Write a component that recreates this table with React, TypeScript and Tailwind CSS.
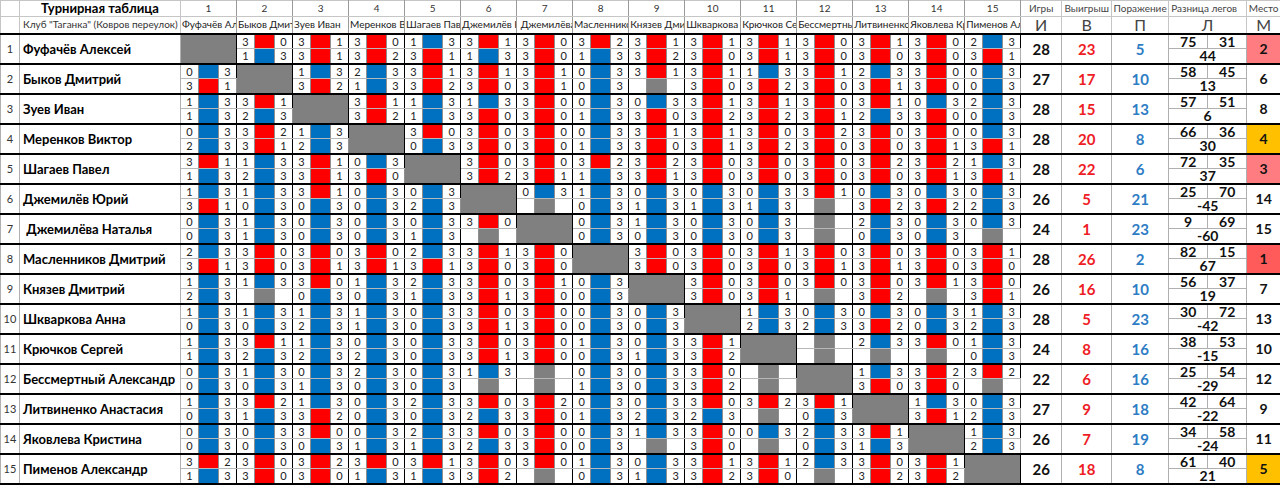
const players = [
  "Фуфачёв Алексей",
  "Быков Дмитрий",
  "Зуев Иван",
  "Меренков Виктор",
  "Шагаев Павел",
  "Джемилёв Юрий",
  " Джемилёва Наталья",
  "Масленников Дмитрий",
  "Князев Дмитрий",
  "Шкваркова Анна",
  "Крючков Сергей",
  "Бессмертный Александр",
  "Литвиненко Анастасия",
  "Яковлева Кристина",
  "Пименов Александр",
];

// each group: "ablb" -> subrow a: a-l, subrow b: b-b; "--" = not played, "xxxx" = self
const grid = [
  "xxxx 3013 3131 3032 1331 3113 3030 3213 3132 3130 3131 3030 3130 3030 2331",
  "0331 xxxx 1332 2313 3132 3130 3131 0303 31-- 3130 1332 3130 2331 3030 0303",
  "1313 3123 xxxx 3132 1313 1330 3030 0313 0330 3132 3132 3031 3123 0330 2303",
  "0323 3231 1323 xxxx 3003 3030 3030 0313 3130 3131 3032 3230 3030 3031 0331",
  "3113 1323 3131 0330 xxxx 3032 3031 3213 3231 3030 3030 3030 3230 3231 1331",
  "1331 1303 3103 0303 0323 xxxx 03-- 1303 0313 0313 0313 31-- 0332 0332 0323",
  "0303 1313 0303 0303 0313 30-- xxxx 0303 1303 0303 0303 ---- 2303 0303 03--",
  "2331 3030 3031 3031 2331 3130 3030 xxxx 3030 3030 3130 3031 3031 3030 3130",
  "1323 13-- 3003 1303 2313 3031 3130 0303 xxxx 3030 3031 30-- 3032 31-- 3031",
  "1303 1303 1323 1313 0303 3031 3030 0303 0303 xxxx 1323 0323 0332 0303 1323",
  "1313 3123 1323 0323 0303 3031 3030 1303 0313 3132 xxxx ---- 23-- 30-- 1303",
  "0303 1303 0313 2303 0303 13-- ---- 0313 0303 3032 ---- xxxx 1330 3230 32--",
  "1303 3213 1332 0303 2303 3023 3230 0313 0323 3023 32-- 3103 xxxx 1331 0323",
  "0303 0303 3003 0313 2313 3023 3030 0303 13-- 3030 03-- 2303 3113 xxxx 1323",
  "3213 3030 3230 3013 3113 3032 30-- 1303 0313 3132 3130 23-- 3032 3132 xxxx",
].map((r) => r.split(" "));

// games, wins, losses, legs won, legs lost, place
const stats = [
  [28, 23, 5, 75, 31, 2],
  [27, 17, 10, 58, 45, 6],
  [28, 15, 13, 57, 51, 8],
  [28, 20, 8, 66, 36, 4],
  [28, 22, 6, 72, 35, 3],
  [26, 5, 21, 25, 70, 14],
  [24, 1, 23, 9, 69, 15],
  [28, 26, 2, 82, 15, 1],
  [26, 16, 10, 56, 37, 7],
  [28, 5, 23, 30, 72, 13],
  [24, 8, 16, 38, 53, 10],
  [22, 6, 16, 25, 54, 12],
  [27, 9, 18, 42, 64, 9],
  [26, 7, 19, 34, 58, 11],
  [26, 18, 8, 61, 40, 5],
];

const placeBg: Record<number, string> = {
  1: "bg-[#ff5b5b]",
  2: "bg-[#ff7c80]",
  3: "bg-[#ff7c80]",
  4: "bg-[#ffc000]",
  5: "bg-[#ffc000]",
};

const cellA = "p-0 h-[15px] text-center align-middle leading-[11px] text-[11px] text-[#222] border border-[#8f8f8f] border-b-[#b8b8b8]";
const cellB = "p-0 h-[15px] text-center align-middle leading-[11px] text-[11px] text-[#222] border border-[#8f8f8f] border-b-2 border-b-black";
const head = "p-0 text-center align-middle leading-[11px] border border-[#c6c6c6]";
const side = "p-0 text-center align-middle leading-[12px] border border-[#b0b0b0] border-b-2 border-b-black";
const legs = "p-0 h-[15px] text-center align-middle leading-[11px] text-[14px] font-bold text-[#111] border border-[#b0b0b0]";

function GroupCells({ code, sub }: { code: string; sub: 0 | 1 }) {
  const l = code[sub * 2];
  const r = code[sub * 2 + 1];
  const played = l !== "-";
  const mid = !played ? "bg-[#808080]" : l === "3" ? "bg-[#ff0000]" : "bg-[#0070c0]";
  const cls = sub === 0 ? cellA : cellB;
  return (
    <>
      <td className={cls}>{played ? l : ""}</td>
      <td className={`${cls} ${mid}`}></td>
      <td className={`${cls} border-r-black`}>{played ? r : ""}</td>
    </>
  );
}

export default function App() {
  return (
    <div className="w-[1280px] h-[486px] overflow-hidden bg-white font-['Lato','Liberation_Sans',sans-serif]">
      <table className="table-fixed border-collapse w-[1280px]">
        <colgroup>
          <col className="w-[19px]" />
          <col className="w-[161px]" />
          {Array.from({ length: 15 }).map((_, j) => (
            <>
              <col key={`a${j}`} className="w-[18px]" />
              <col key={`b${j}`} className="w-[20px]" />
              <col key={`c${j}`} className="w-[18px]" />
            </>
          ))}
          <col className="w-[41px]" />
          <col className="w-[50px]" />
          <col className="w-[57px]" />
          <col className="w-[39px]" />
          <col className="w-[39px]" />
          <col className="w-[34px]" />
        </colgroup>
        <tbody>
          <tr className="h-[16px]">
            <td className={head}></td>
            <td className={`${head} text-[13px] font-bold text-black`}>Турнирная таблица</td>
            {players.map((_, j) => (
              <td key={j} colSpan={3} className={`${head} text-[10px] text-[#333] border-r-[#9a9a9a]`}>
                {j + 1}
              </td>
            ))}
            <td className={`${head} text-[10px] text-[#444]`}>Игры</td>
            <td className={`${head} text-[10px] text-[#444]`}>Выигрыш</td>
            <td className={`${head} text-[10px] text-[#444]`}>Поражение</td>
            <td colSpan={2} className={`${head} text-[10px] text-[#444] text-left pl-[2px]`}>Разница легов</td>
            <td className={`${head} text-[10px] text-[#444]`}>Место</td>
          </tr>
          <tr className="h-[17px]">
            <td className={`${head} border-b-2 border-b-black`}></td>
            <td className={`${head} border-b-2 border-b-black text-[10px] text-[#333] text-left pl-[3px] whitespace-nowrap overflow-hidden`}>
              Клуб "Таганка" (Ковров переулок)
            </td>
            {players.map((p, j) => (
              <td
                key={j}
                colSpan={3}
                className={`${head} border-b-2 border-b-black border-r-[#9a9a9a] text-[10px] text-[#222] text-left pl-[1px] whitespace-pre overflow-hidden`}
              >
                {p}
              </td>
            ))}
            <td className={`${head} border-b-2 border-b-black text-[16px] text-[#444]`}>И</td>
            <td className={`${head} border-b-2 border-b-black text-[16px] text-[#444]`}>В</td>
            <td className={`${head} border-b-2 border-b-black text-[16px] text-[#444]`}>П</td>
            <td colSpan={2} className={`${head} border-b-2 border-b-black text-[16px] text-[#444]`}>Л</td>
            <td className={`${head} border-b-2 border-b-black text-[16px] text-[#444]`}>М</td>
          </tr>
          {players.map((p, i) => {
            const [games, wins, losses, lw, ll, place] = stats[i];
            const diff = lw - ll;
            return (
              <>
                <tr key={`a${i}`}>
                  <td rowSpan={2} className={`${side} text-[11px] text-[#333]`}>{i + 1}</td>
                  <td rowSpan={2} className={`${side} text-[13px] font-bold text-black text-left pl-[3px] whitespace-pre overflow-hidden`}>
                    {p}
                  </td>
                  {grid[i].map((code, j) =>
                    code === "xxxx" ? (
                      <td key={j} rowSpan={2} colSpan={3} className="p-0 bg-[#808080] border border-[#8f8f8f] border-r-black border-b-2 border-b-black"></td>
                    ) : (
                      <GroupCells key={j} code={code} sub={0} />
                    )
                  )}
                  <td rowSpan={2} className={`${side} text-[15px] font-bold text-[#111]`}>{games}</td>
                  <td rowSpan={2} className={`${side} text-[15px] font-bold text-[#ee1c25]`}>{wins}</td>
                  <td rowSpan={2} className={`${side} text-[15px] font-bold text-[#2e7dc4]`}>{losses}</td>
                  <td className={legs}>{lw}</td>
                  <td className={legs}>{ll}</td>
                  <td rowSpan={2} className={`${side} text-[14px] font-bold text-[#111] ${placeBg[place] ?? ""}`}>{place}</td>
                </tr>
                <tr key={`b${i}`}>
                  {grid[i].map((code, j) => (code === "xxxx" ? null : <GroupCells key={j} code={code} sub={1} />))}
                  <td colSpan={2} className={`${legs} border-b-2 border-b-black`}>
                    {diff}
                  </td>
                </tr>
              </>
            );
          })}
        </tbody>
      </table>
    </div>
  );
}
